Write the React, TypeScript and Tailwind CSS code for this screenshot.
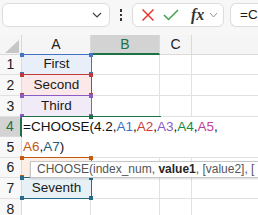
import React from 'react';

const font = { fontFamily: '"Liberation Sans", Arial, sans-serif' };

function Corner({ pos, color }: { pos: string; color: string }) {
  return <div className={`absolute w-[4px] h-[4px] ${pos}`} style={{ background: color }} />;
}

function RefCell({
  text,
  bg,
  color,
}: {
  text: string;
  bg: string;
  color: string;
}) {
  return (
    <div className="relative w-[69px] shrink-0 h-full flex items-center justify-center" style={{ background: bg }}>
      <span className="text-[13.5px] text-[#1a1a1a]">{text}</span>
      <div className="absolute left-[-1px] right-[-1px] top-[-1px] bottom-[-1px] border-t border-r border-b" style={{ borderColor: color }} />
      <Corner pos="left-[-2px] top-[-2px]" color={color} />
      <Corner pos="right-[-2px] top-[-2px]" color={color} />
      <Corner pos="left-[-2px] bottom-[-2px]" color={color} />
      <Corner pos="right-[-2px] bottom-[-2px]" color={color} />
    </div>
  );
}

function RowHead({ n, active }: { n: number; active?: boolean }) {
  return (
    <div
      className={`w-[22px] shrink-0 h-full flex items-center justify-center text-[14px] border-r ${
        active ? 'bg-[#d3d3d3] text-[#1e7145] border-r-2 border-r-[#1e7145]' : 'bg-[#f8f8f8] text-[#222] border-[#dadada]'
      }`}
    >
      {n}
    </div>
  );
}

function Blank({ w }: { w: string }) {
  return <div className={`${w} shrink-0 h-full border-r border-[#e1e1e1] bg-white`} />;
}

function Row({ n, h, a }: { n: number; h: string; a?: React.ReactNode }) {
  return (
    <div className={`flex ${h} border-b border-[#e1e1e1]`}>
      <RowHead n={n} />
      {a ?? <Blank w="w-[69px]" />}
      <Blank w="w-[69px]" />
      <Blank w="w-[32px]" />
      <div className="flex-1 bg-white" />
    </div>
  );
}

export default function App() {
  return (
    <div className="w-[258px] h-[215px] overflow-hidden bg-white relative" style={font}>
      {/* formula bar */}
      <div className="h-[35px] bg-[#f7f7f7] flex items-start pt-[3px] pl-[2px]">
        <div className="w-[108px] shrink-0 h-[24px] bg-white border border-[#dcdcdc] rounded-[6px] flex items-center justify-end pr-[7px]">
          <svg width="10" height="6" viewBox="0 0 10 6">
            <path d="M1 1 L5 5 L9 1" fill="none" stroke="#444" strokeWidth="1.2" />
          </svg>
        </div>
        <div className="w-[22px] shrink-0 h-[24px] flex flex-col items-center justify-center gap-[2px]">
          <div className="w-[2.5px] h-[2.5px] bg-[#333]" />
          <div className="w-[2.5px] h-[2.5px] bg-[#333]" />
          <div className="w-[2.5px] h-[2.5px] bg-[#333]" />
        </div>
        <div className="w-[92px] shrink-0 h-[24px] bg-white border border-[#dcdcdc] rounded-[6px] flex items-center pl-[8px]">
          <svg width="14" height="14" viewBox="0 0 14 14">
            <path d="M1.5 1.5 L12.5 12.5 M12.5 1.5 L1.5 12.5" stroke="#e53935" strokeWidth="1.5" />
          </svg>
          <svg width="16" height="14" viewBox="0 0 16 14" className="ml-[8px]">
            <path d="M1 7 L5.5 11.5 L15 2" fill="none" stroke="#3fa34d" strokeWidth="1.5" />
          </svg>
          <span
            className="ml-[12px] text-[16px] italic font-bold text-[#333] leading-none"
            style={{ fontFamily: '"Liberation Serif", "Times New Roman", serif' }}
          >
            fx
          </span>
          <svg width="9" height="6" viewBox="0 0 9 6" className="ml-[5px]">
            <path d="M1 1 L4.5 5 L8 1" fill="none" stroke="#999" strokeWidth="1" />
          </svg>
        </div>
        <div className="ml-[6px] flex-1 min-w-0 overflow-hidden h-[24px] bg-white border border-[#dcdcdc] rounded-l-[6px] border-r-0 flex items-center pl-[9px] text-[13.5px] text-[#1a1a1a] whitespace-nowrap">
          =CHOOSE(4.2,A1
        </div>
      </div>

      {/* column headers */}
      <div className="flex h-[20px] bg-[#f5f5f5] text-[14px]">
        <div className="w-[22px] shrink-0 h-full border-r border-b border-[#dadada] relative">
          <svg width="14" height="13" viewBox="0 0 14 13" className="absolute left-[5px] top-[5px]">
            <polygon points="14,0 14,13 0,13" fill="#c6c6c6" />
          </svg>
        </div>
        <div className="w-[69px] shrink-0 h-full border-r border-b border-[#dadada] flex items-center justify-center text-[#222]">A</div>
        <div className="w-[69px] shrink-0 h-full border-r border-[#dadada] bg-[#d3d3d3] border-b-2 border-b-[#1e7145] flex items-center justify-center text-[#1e7145]">
          B
        </div>
        <div className="w-[32px] shrink-0 h-full border-r border-b border-[#dadada] flex items-center justify-center text-[#222]">C</div>
        <div className="flex-1 h-full border-b border-[#dadada]" />
      </div>

      <Row n={1} h="h-[20px]" a={<RefCell text="First" bg="#e9eff9" color="#4472c4" />} />
      <Row n={2} h="h-[21px]" a={<RefCell text="Second" bg="#fbe8e8" color="#c0393b" />} />
      <Row n={3} h="h-[21px]" a={<RefCell text="Third" bg="#f1ebf8" color="#8a5cc6" />} />

      {/* editing rows 4-5 */}
      <div className="flex h-[41px] border-b border-[#e1e1e1]">
        <div className="w-[22px] shrink-0 flex flex-col">
          <div className="h-[20px] border-b border-[#dadada]">
            <RowHead n={4} active />
          </div>
          <div className="h-[20px]">
            <RowHead n={5} />
          </div>
        </div>
        <div className="relative flex-1 bg-white pl-[1px] text-[13.5px] leading-[20px] whitespace-nowrap text-[#111]">
          <div className="absolute left-[-1px] top-[-1px] w-[140px] h-[21px] border-t border-l border-[#1e7145]" />
          <div className="absolute left-[67px] top-[-2px] w-[4px] h-[4px] bg-[#1e7145]" />
          <div>
            =CHOOSE(4.2,<span className="text-[#3a72c8]">A1</span>,<span className="text-[#d03a3c]">A2</span>,
            <span className="text-[#8a5ac8]">A3</span>,<span className="text-[#168a3e]">A4</span>,
            <span className="text-[#c23c98]">A5</span>,
          </div>
          <div>
            <span className="text-[#c55a11]">A6</span>,<span className="text-[#1e5d78]">A7</span>)
          </div>
        </div>
      </div>

      <Row n={6} h="h-[20px]" a={<RefCell text="" bg="#fdefe5" color="#c55a11" />} />
      <Row n={7} h="h-[21px]" a={<RefCell text="Seventh" bg="#e7f0f5" color="#2a6b8a" />} />
      <Row n={8} h="h-[21px]" />

      {/* function tooltip */}
      <div className="absolute left-[30px] top-[161px] w-[240px] h-[17px] bg-white border border-[#c6c6c6] shadow-[0_1px_2px_rgba(0,0,0,0.15)] pl-[6px] text-[12px] leading-[15px] text-[#555] whitespace-nowrap">
        CHOOSE(index_num, <span className="font-bold text-[#262626]">value1</span>, [value2], [
      </div>
    </div>
  );
}
